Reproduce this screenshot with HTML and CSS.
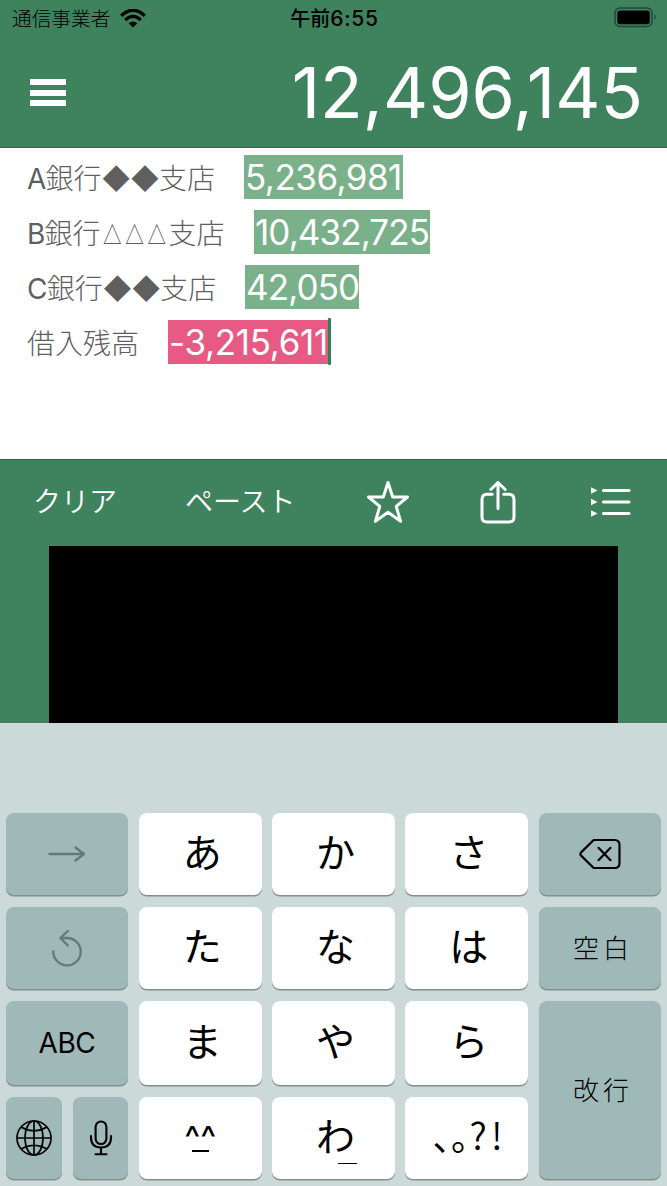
FILE: index.html
```html
<!DOCTYPE html>
<html lang="ja">
<head>
<meta charset="utf-8">
<title>メモ電卓</title>
<link rel="stylesheet" href="styles.css">
</head>
<body>
<header class="header">
  <div class="status">
    <div class="carrier"><span class="carrier-name">通信事業者</span>
      <svg class="wifi" width="26" height="19" viewBox="0 0 26 19"><path d="M1.2 6.7Q13-4.2 24.8 6.7" fill="none" stroke="#000" stroke-width="3.4"/><path d="M5.2 11Q13 3.8 20.8 11" fill="none" stroke="#000" stroke-width="3.2"/><path d="M13 18.6L8.7 14.3Q13 10.9 17.3 14.3Z"/></svg>
    </div>
    <div class="clock"><span class="ampm">午前</span><span>6:55</span></div>
    <svg class="battery" width="43" height="21" viewBox="0 0 43 21"><rect x="1" y="1" width="37" height="18.5" rx="5" fill="none" stroke="#000" stroke-opacity=".45" stroke-width="1.5"/><rect x="3.3" y="3.5" width="32.4" height="13.7" rx="2.6"/><path d="M40.6 7.2Q43 10 40.6 13.2Z" opacity=".5"/></svg>
  </div>
  <div class="titlebar">
    <div class="menu"><i></i><i></i><i></i></div>
    <div class="total">12,496,145</div>
  </div>
</header>
<main class="memo">
  <div class="line"><span class="label label-a"><span class="latin">A</span>銀行<span class="dia">◆◆</span>支店</span><span class="num">5,236,981</span></div>
  <div class="line"><span class="label label-b"><span class="latin">B</span>銀行<span class="tri">△△△</span>支店</span><span class="num num-b">10,432,725</span></div>
  <div class="line"><span class="label label-c"><span class="latin">C</span>銀行<span class="dia">◆◆</span>支店</span><span class="num num-c">42,050</span></div>
  <div class="line"><span class="label label-d">借入残高</span><span class="num num-d">-3,215,611</span><i class="caret"></i></div>
</main>
<nav class="toolbar">
  <span class="tool clear">クリア</span>
  <span class="tool paste">ペースト</span>
  <svg class="star" width="44" height="44" viewBox="0 0 44 44"><path d="M22 2.5L26.7 17H41.5L30.2 26.3L34.6 41.3L22 32.3L9.4 41.3L13.8 26.3L2.5 17H17.3Z" fill="none" stroke="#fff" stroke-width="3" stroke-linejoin="round"/></svg>
  <svg class="share" width="36" height="44" viewBox="0 0 36 44"><path d="M12.2 14.2H7Q2 14.2 2 19.2V37Q2 42 7 42H29Q34 42 34 37V19.2Q34 14.2 29 14.2H23.8M18 28.5V3M10.8 9.5L18 2.5L25.2 9.5" fill="none" stroke="#fff" stroke-width="3" stroke-linecap="round" stroke-linejoin="round"/></svg>
  <svg class="list" width="40" height="32" viewBox="0 0 40 32"><path d="M0 1.2L6.5 4.5L0 7.8ZM0 12.7L6.5 16L0 19.3ZM0 24.2L6.5 27.5L0 30.8Z" fill="#fff"/><path d="M12.5 4.5H38M12.5 16H38M12.5 27.5H38" stroke="#fff" stroke-width="3.2" stroke-linecap="round"/></svg>
</nav>
<section class="panel"><div class="ad"></div></section>
<section class="keyboard">
  <div class="key dark dim"><svg width="38" height="18" viewBox="0 0 38 18"><path d="M1.5 9H35.5M27.5 2.5L36 9L27.5 15.5" fill="none" stroke="currentColor" stroke-width="2.3" stroke-linecap="round" stroke-linejoin="round"/></svg></div>
  <div class="key kana">あ</div><div class="key kana">か</div><div class="key kana">さ</div>
  <div class="key dark"><svg width="42" height="32" viewBox="0 0 42 32"><path d="M14.7 2H35.5Q40.5 2 40.5 7V25Q40.5 30 35.5 30H14.7L2.1 17.6Q.6 16 2.1 14.4Z M19.5 9.8L31.5 22.2M31.5 9.8L19.5 22.2" fill="none" stroke="currentColor" stroke-width="2.2" stroke-linecap="round" stroke-linejoin="round"/></svg></div>
  <div class="key dark dim"><svg class="undo" width="32" height="38" viewBox="0 0 32 38"><path d="M2.3 22.5A13.7 13.7 0 1 0 16 9H9.3M16.8 2L9.3 9L16.8 16.5" fill="none" stroke="currentColor" stroke-width="2.3" stroke-linecap="round" stroke-linejoin="round"/></svg></div>
  <div class="key kana">た</div><div class="key kana">な</div><div class="key kana">は</div>
  <div class="key dark word">空白</div>
  <div class="key dark abc">ABC</div>
  <div class="key kana">ま</div><div class="key kana">や</div><div class="key kana">ら</div>
  <div class="key dark word enter">改行</div>
  <div class="pair">
    <div class="key dark globe"><svg width="38" height="38" viewBox="0 0 38 38"><g fill="none" stroke="currentColor" stroke-width="1.7"><circle cx="19" cy="19" r="17"/><ellipse cx="19" cy="19" rx="9" ry="17"/><path d="M19 2V36M2 19H36M6 8Q19 15.5 32 8M6 30Q19 22.5 32 30"/></g></svg></div>
    <div class="key dark mic"><svg width="24" height="38" viewBox="0 0 24 38"><g fill="none" stroke="currentColor" stroke-width="2.1" stroke-linecap="round"><rect x="6.6" y="2.5" width="10.8" height="22.5" rx="5.4"/><path d="M2 17V18.5Q2 28.5 12 28.5T22 18.5V17M12 29V35M6.5 35.3H17.5"/></g></svg></div>
  </div>
  <div class="key face"><span class="carets">^^</span><span class="mouth"></span></div>
  <div class="key kana wa"><span>わ</span><i></i></div>
  <div class="key punct"><span class="ten">、</span><span class="maru">。</span><span class="qm">?</span><span class="ex">!</span></div>
</section>
</body>
</html>
```
FILE: styles.css
```css
* { box-sizing: border-box; }
body {
  margin: 0;
  width: 667px;
  height: 1186px;
  overflow: hidden;
  background: #fff;
  font-family: Inter, "Noto Sans CJK JP", sans-serif;
}
svg { display: block; flex: none; }
.header {
  height: 148px;
  background: #3e825e;
  border-bottom: 1px solid #08784a;
}
.status {
  display: grid;
  grid-template-columns: 1fr auto 1fr;
  height: 37px;
  align-items: center;
  padding: 0 10px 0 12px;
}
.carrier { display: flex; align-items: center; gap: 9.5px; }
.carrier-name { font-size: 19.7px; font-weight: 300; line-height: 36px; white-space: nowrap; }
.clock {
  display: flex;
  align-items: center;
  font-size: 21px;
  font-weight: 500;
  letter-spacing: .7px;
  line-height: 36px;
}
.ampm { font-size: 20px; letter-spacing: 0; }
.battery { justify-self: end; margin-top: -2px; }
.titlebar {
  display: flex;
  justify-content: space-between;
  height: 110px;
  padding: 0 24px 0 30px;
}
.menu {
  display: flex;
  flex-direction: column;
  gap: 4.7px;
  padding-top: 42px;
}
.menu i { width: 36px; height: 6px; background: #fff; }
.total {
  color: #fff;
  font-size: 70px;
  line-height: 112px;
  letter-spacing: 0;
}
.memo { height: 311px; padding: 7px 27px; }
.line { display: flex; height: 55px; }
.label {
  flex: none;
  color: #5f5f5f;
  font-size: 28px;
  font-weight: 300;
  line-height: 48px;
  white-space: nowrap;
}
.latin { font-weight: 400; letter-spacing: -.8px; }
.dia { letter-spacing: -.6px; }
.label-a { width: 217px; }
.label-b { width: 227px; }
.label-c { width: 218px; }
.label-d { width: 141px; }
.tri {
  display: inline-block;
  width: 66px;
  margin-left: 2px;
  font-family: "Noto Sans CJK JP", sans-serif;
  font-size: 23.5px;
  font-weight: 500;
  letter-spacing: 4.7px;
  line-height: 40px;
  transform: scaleX(.79);
  transform-origin: left center;
}
.num {
  width: 159px;
  height: 44px;
  background: #7bb18a;
  color: #fff;
  font-size: 35px;
  line-height: 45px;
  padding-left: 1px;
  white-space: nowrap;
  letter-spacing: -.5px;
}
.num-b { width: 176px; letter-spacing: -.9px; }
.num-c { width: 114px; letter-spacing: -.9px; }
.num-d { width: 160px; background: #e75a84; letter-spacing: -.3px; }
.caret { width: 3px; height: 47px; margin-top: -2px; background: #2d825a; border-radius: 1px; }
.toolbar {
  display: flex;
  align-items: center;
  height: 87px;
  padding: 0 0 2px 33px;
  background: #3e825e;
  border-top: 1px solid #08784a;
  color: #fff;
}
.tool { font-size: 28px; font-weight: 350; line-height: 80px; white-space: nowrap; }
.clear { width: 152px; }
.paste { width: 181px; }
.share { margin-left: 70px; }
.list { margin-left: 75px; }
.panel { height: 177px; padding: 0 49px; background: #3e825e; }
.ad { height: 177px; background: #000; }
.keyboard {
  display: grid;
  grid-template-columns: repeat(5, 122.8px);
  grid-template-rows: 82px 82.5px 83.5px 82px;
  gap: 12.1px 10.5px;
  height: 463px;
  padding: 89.6px 5.5px 0;
  background: #cbd9d8;
}
.key {
  display: flex;
  align-items: center;
  justify-content: center;
  background: #fff;
  border-radius: 8px;
  box-shadow: 0 1.5px 0 #858d8d;
  color: #000;
  font-size: 37px;
  line-height: 80px;
}
.kana { font-size: 39px; padding: 0 0 2px 4px; }
.dark { background: #9eb9b7; }
.dim { color: #667977; }
.word { font-size: 26px; font-weight: 300; letter-spacing: 4px; padding: 2px 0 0 6px; }
.enter { grid-row: 3 / 5; grid-column: 5; }
.abc { font-size: 28px; letter-spacing: -.5px; }
.pair { display: flex; gap: 11px; }
.globe { width: 56.8px; }
.mic { width: 55px; }
.face { flex-direction: column; }
.carets { font-size: 34px; line-height: 24px; height: 24px; margin-top: 2px; }
.mouth { width: 17px; height: 2px; background: #000; }
.wa { position: relative; }
.wa i { position: absolute; left: 66px; top: 66px; width: 19px; height: 1.5px; background: #000; }
.punct { justify-content: flex-start; padding-left: 27px; font-family: "Noto Sans CJK JP", sans-serif; }
.punct span { display: block; }
.ten, .maru { width: 18.5px; font-size: 36px; margin-top: -5px; font-feature-settings: "halt"; }
.qm { width: 21.5px; font-weight: 350; margin-top: -7px; }
.ex { font-weight: 350; margin-top: -7px; }
```
